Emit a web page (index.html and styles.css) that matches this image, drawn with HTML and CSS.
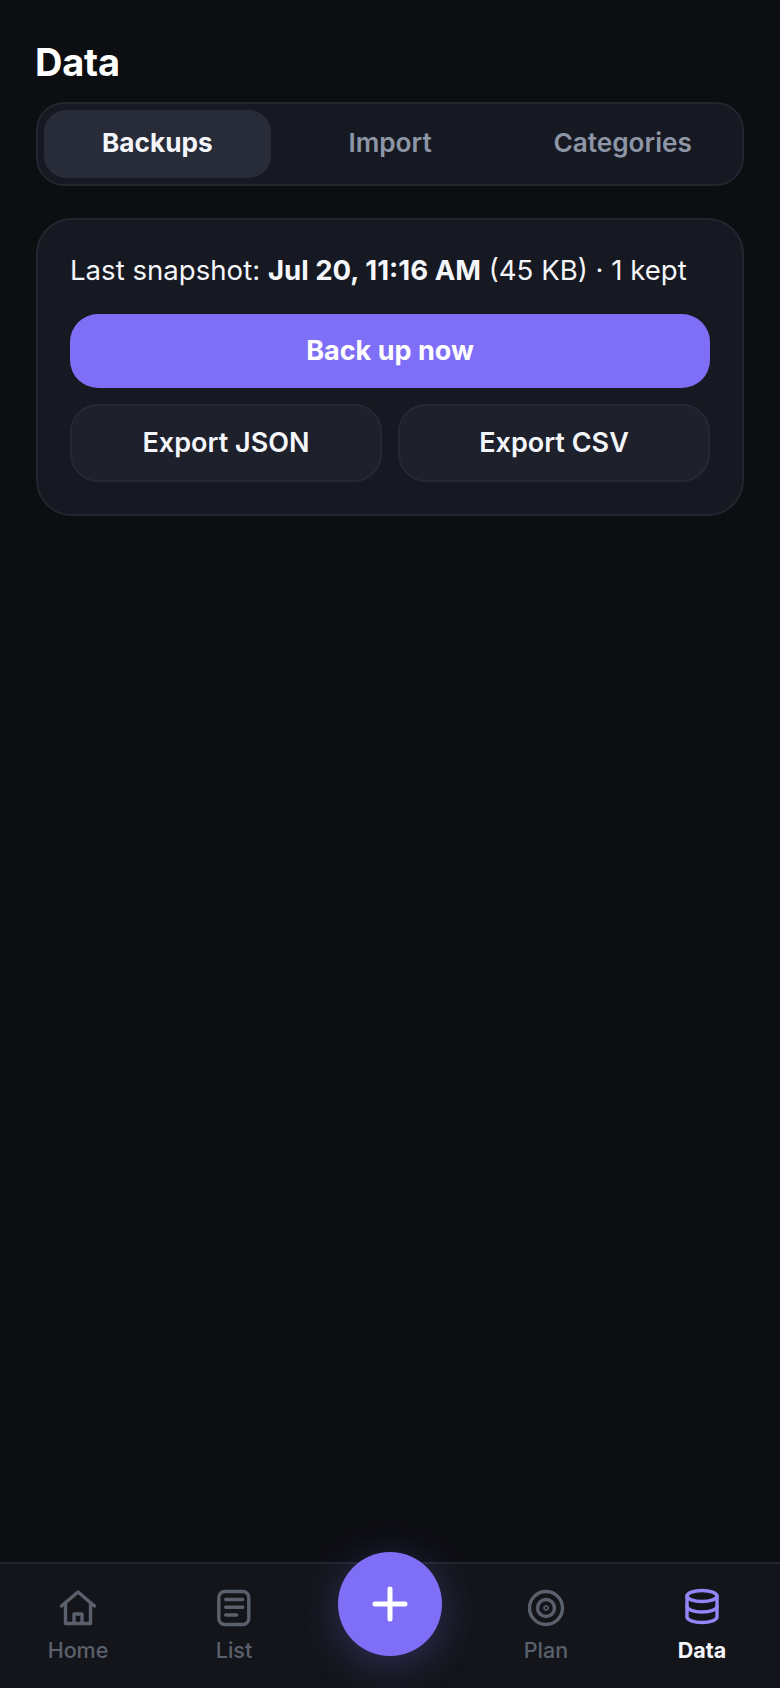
FILE: index.html
```html
<!DOCTYPE html>
<html>
<head>
	<title>Data</title>
	<link rel="stylesheet" href="styles.css">
</head>
<body>
	<div class="app">
		<main class="page">
			<h1 class="title">Data</h1>
			<div class="tabs">
				<div class="tab active">Backups</div>
				<div class="tab">Import</div>
				<div class="tab">Categories</div>
			</div>
			<section class="card">
				<p class="snapshot">Last snapshot: <b>Jul 20, 11:16 AM</b> (45 KB) · 1 kept</p>
				<div class="btn primary">Back up now</div>
				<div class="btn-row">
					<div class="btn">Export JSON</div>
					<div class="btn">Export CSV</div>
				</div>
			</section>
		</main>
		<nav class="nav">
			<div class="nav-item">
				<svg class="ico" viewBox="0 0 40 40"><path d="M3.500 18 20 4l16.500 14"/><path d="M7.500 15v20.500h25V15"/><path d="M16 35.500V26h8v9.500"/></svg>
				<span>Home</span>
			</div>
			<div class="nav-item">
				<svg class="ico" viewBox="0 0 40 40"><rect x="4.800" y="3.500" width="30" height="33" rx="6"/><path d="M11.700 11.500h17M11.700 19.300h17M11.700 27h11"/></svg>
				<span>List</span>
			</div>
			<div class="nav-item">
				<div class="fab">
					<svg viewBox="0 0 40 40"><path d="M20 5v30M5 20h30"/></svg>
				</div>
			</div>
			<div class="nav-item">
				<svg class="ico" viewBox="0 0 40 40"><circle cx="20" cy="20" r="16.500"/><circle cx="20" cy="20" r="8.500"/><circle class="dot" cx="20" cy="20" r="2"/></svg>
				<span>Plan</span>
			</div>
			<div class="nav-item on">
				<svg class="ico" viewBox="0 0 40 40"><ellipse cx="20" cy="8" rx="15" ry="5.500"/><path d="M5 8v21c0 3 6.700 5.500 15 5.500S35 32 35 29V8"/><path d="M5 18.500C5 21.500 11.700 24 20 24s15-2.500 15-5.500"/></svg>
				<span>Data</span>
			</div>
		</nav>
	</div>
</body>
</html>
```

FILE: styles.css
```css
* { box-sizing: border-box; }
body { margin: 0; background: #0d0e12; color: #fff; font-family: Inter, "Liberation Sans", sans-serif; }
.app { display: flex; flex-direction: column; min-height: 100vh; height: 1688px; }
.page { flex: 1; padding: 39px 36px 0; }
.title { margin: 0 0 17px -1px; font-size: 38px; line-height: 46px; font-weight: 700; letter-spacing: -.2px; }

.tabs { display: flex; gap: 6px; height: 84px; padding: 6px; background: #161921; border: 2px solid #23252f; border-radius: 28px; }
.tab { flex: 1; display: flex; align-items: center; justify-content: center; padding-bottom: 4px; border-radius: 22px; font-size: 26.200px; font-weight: 600; color: #8d96a6; }
.tab.active { background: #282b38; color: #f5f6fa; font-weight: 700; }

.card { margin-top: 32px; height: 298px; padding: 30px 32px 32px; background: #161921; border: 2px solid #23252f; border-radius: 36px; }
.snapshot { margin: 0 0 24px; font-size: 27.600px; line-height: 40px; color: #f5f6fa; }
.snapshot b { font-weight: 700; }

.btn { flex: 1; display: flex; align-items: center; justify-content: center; height: 78px; padding-bottom: 2px; background: #1e202b; border: 2px solid #262833; border-radius: 28px; font-size: 27px; font-weight: 600; color: #f5f6fa; }
.btn.primary { height: 74px; background: #7f6ff7; border: 0; color: #fff; font-weight: 700; }
.btn-row { display: flex; gap: 16px; margin-top: 16px; }

.nav { display: grid; grid-template-columns: repeat(5, 1fr); height: 126px; padding-top: 24px; background: #14151b; border-top: 2px solid #23252f; }
.nav-item { display: flex; flex-direction: column; align-items: center; font-size: 21.500px; font-weight: 500; line-height: 28px; color: #5a606c; }
.ico { width: 40px; height: 40px; margin-bottom: 8px; fill: none; stroke: #5a606c; stroke-width: 3.400; stroke-linecap: round; stroke-linejoin: round; }
.ico .dot { stroke-width: 1.500; }
.nav-item.on { color: #f5f6fa; font-weight: 700; }
.nav-item.on .ico { stroke: #9585f8; }

.fab { display: flex; align-items: center; justify-content: center; width: 104px; height: 104px; margin-top: -36px; background: #7f6ff7; border-radius: 50%; box-shadow: 0 8px 40px rgba(127, 111, 247, .28); }
.fab svg { width: 40px; height: 40px; fill: none; stroke: #fff; stroke-width: 5; stroke-linecap: round; }
```
